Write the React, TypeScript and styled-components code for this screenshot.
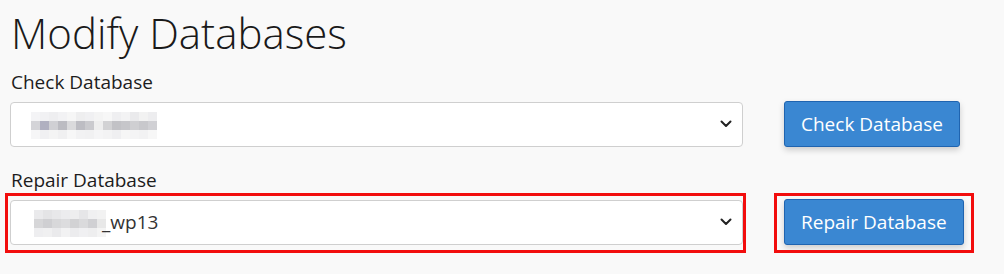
import React from 'react'
import styled, { createGlobalStyle } from 'styled-components'

const GlobalStyle = createGlobalStyle`
  html, body {
    margin: 0;
    padding: 0;
    background: #f9f9f9;
  }
  body {
    font-family: 'Open Sans', 'Noto Sans', Arial, sans-serif;
    color: #1d1d1d;
  }
`

// pixelated (redacted) database names, one grey level per block
const checkMosaic = [
  ['#f4f4f6', '#f1f1f3', '#eeeef0', '#f2f2f4', '#f6f6f6', '#eeeeef', '#f0f0f2', '#f4f4f4', '#f7f7f7', '#efeff1', '#f3f3f4', '#eaeaec', '#f2f2f2', '#ededef'],
  ['#d4d4d8', '#b0b0c0', '#d0d0d4', '#bcbcc2', '#dadadc', '#bdbdc3', '#cacace', '#eeeeee', '#d2d2d4', '#c2c2c6', '#c6c6ca', '#cfcfd2', '#c8c8cc', '#d0d0d4'],
  ['#f6f6f7', '#f0f0f2', '#f4f4f4', '#f0f0f1', '#f7f7f7', '#f2f2f3', '#f1f1f2', '#f5f5f6', '#f3f3f4', '#efeff1', '#f6f6f6', '#f4f4f5', '#f2f2f3', '#f7f7f7'],
]

const repairMosaic = [
  ['#eaeaec', '#e4e4e6', '#e8e8ea', '#ececee', '#eeeeef', '#e6e6e8', '#f0f0f1', '#f2f2f2'],
  ['#d6d6d8', '#cfcfd2', '#d8d8da', '#dcdcde', '#d2d2d4', '#dadadc', '#d0d0d3', '#e8e8e8'],
  ['#eeeef0', '#f0f0f1', '#eaeaec', '#f2f2f3', '#ececee', '#f0f0f2', '#eeeeef', '#f4f4f4'],
]

const Mosaic: React.FC<{ cells: string[][] }> = ({ cells }) => {
  const size = 9
  const w = cells[0].length * size
  const h = cells.length * size
  return (
    <MosaicSvg width={w} height={h} viewBox={`0 0 ${w} ${h}`}>
      {cells.map((row, r) =>
        row.map((fill, c) => <rect key={`${r}-${c}`} x={c * size} y={r * size} width={size} height={size} fill={fill} />)
      )}
    </MosaicSvg>
  )
}

const Chevron = () => (
  <ChevronSvg width="12" height="8" viewBox="0 0 12 8">
    <path d="M1.5 1.5 L6 6 L10.5 1.5" fill="none" stroke="#222" strokeWidth="2" strokeLinecap="round" strokeLinejoin="round" />
  </ChevronSvg>
)

const App: React.FC = () => {
  return (
    <Page>
      <GlobalStyle />
      <Title>Modify Databases</Title>

      <FormGroup>
        <Label>Check Database</Label>
        <Row>
          <Select>
            <Mosaic cells={checkMosaic} />
            <Chevron />
          </Select>
          <Button>Check Database</Button>
        </Row>
      </FormGroup>

      <FormGroup>
        <Label>Repair Database</Label>
        <Row>
          <Highlight $top={7} $left={5} $right={3} $bottom={8}>
            <Select>
              <SelectValue>
                <Mosaic cells={repairMosaic} />
                <span>_wp13</span>
              </SelectValue>
              <Chevron />
            </Select>
          </Highlight>
          <Highlight $top={6} $left={10} $right={10} $bottom={8}>
            <Button>Repair Database</Button>
          </Highlight>
        </Row>
      </FormGroup>
    </Page>
  )
}

const Page = styled.div`
  width: 1004px;
  height: 274px;
  padding: 0 0 0 10px;
  box-sizing: border-box;
  overflow: hidden;
`

const Title = styled.h1`
  margin: 0;
  padding-top: 8px;
  padding-left: 1px;
  font-size: 42px;
  font-weight: 300;
  line-height: 50px;
  color: #1a1a1a;
`

const FormGroup = styled.div`
  display: flex;
  flex-direction: column;
  margin-top: 12px;

  & + & {
    margin-top: 21px;
  }
`

const Label = styled.label`
  font-size: 19px;
  font-weight: 400;
  line-height: 24px;
  padding-left: 1px;
  margin-bottom: 7px;
  color: #1d1d1d;
`

const Row = styled.div`
  display: flex;
  align-items: center;
  gap: 41px;
`

const Select = styled.div`
  width: 733px;
  height: 45px;
  box-sizing: border-box;
  background: #fff;
  border: 1px solid #cfcfcf;
  border-radius: 4px;
  display: flex;
  align-items: center;
  justify-content: space-between;
  padding: 0 8px 0 20px;
  font-size: 19px;
  color: #333;
`

const SelectValue = styled.div`
  display: flex;
  align-items: center;
  padding-left: 3px;

  span {
    margin-left: -4px;
  }
`

const MosaicSvg = styled.svg`
  display: block;
  margin-top: 2px;
`

const ChevronSvg = styled.svg`
  display: block;
  margin-right: 2px;
`

const Button = styled.button`
  height: 46px;
  box-sizing: border-box;
  padding: 0 16px;
  background: #3a87d2;
  border: 1px solid #1f64b0;
  border-radius: 3px;
  color: #fff;
  font-family: 'Open Sans', 'Noto Sans', Arial, sans-serif;
  font-size: 19px;
  line-height: 24px;
  box-shadow: 0 3px 6px rgba(0, 0, 0, 0.18);
  cursor: pointer;
`

const Highlight = styled.div<{ $top: number; $left: number; $right: number; $bottom: number }>`
  position: relative;
  display: flex;

  &::after {
    content: '';
    position: absolute;
    top: ${(p) => -p.$top}px;
    left: ${(p) => -p.$left}px;
    right: ${(p) => -p.$right}px;
    bottom: ${(p) => -p.$bottom}px;
    border: 3px solid #f20d0d;
    pointer-events: none;
  }
`

export default App
